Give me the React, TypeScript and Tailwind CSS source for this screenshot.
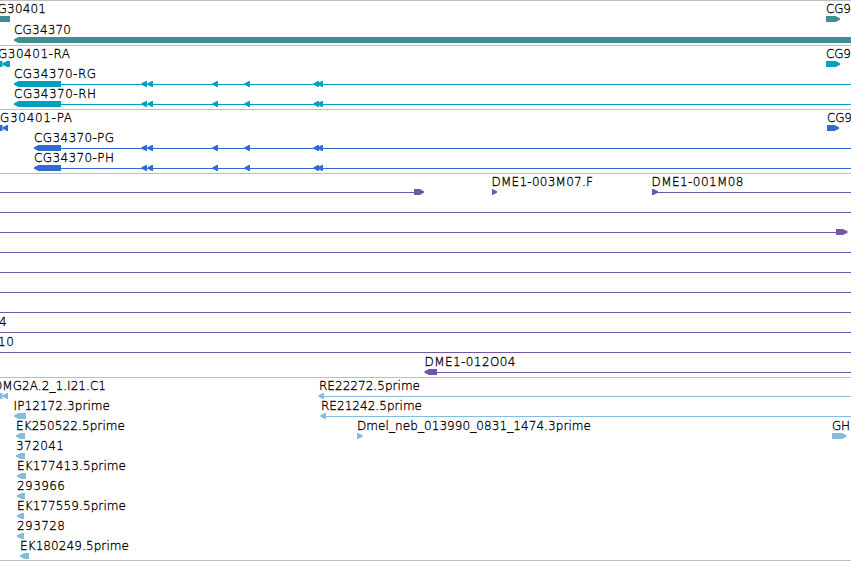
import React from "react"

type Dir = "left" | "right" | "none"

interface Box {
  start: number
  end: number
  dir: Dir
}

interface Label {
  text: string
  x: number
  width: number
}

interface Row {
  labels?: Label[]
  boxes?: Box[]
  lines?: [number, number][]
}

interface Track {
  name: string
  className: string
  rows: Row[]
}

const WIDTH = 851
const TIP = 4.5

const label = (text: string, x: number, width: number): Label => ({ text, x, width })
const box = (start: number, end: number, dir: Dir = "left"): Box => ({ start, end, dir })

// Exons shared by the CG34370 transcripts and proteins
const exons = [
  box(141.5, 147),
  box(147.5, 153),
  box(212.5, 218),
  box(244.5, 250),
  box(313.5, 319),
  box(317.5, 323),
]

const fullLine: Row = { lines: [[0, WIDTH]] }

const tracks: Track[] = [
  {
    name: "gene",
    className: "text-[#3e8e94] gap-px pb-[3px]",
    rows: [
      {
        labels: [label("CG30401", -11, 57), label("CG9", 826, 25)],
        boxes: [box(0, 10, "none"), box(826, 840, "right")],
      },
      { labels: [label("CG34370", 14, 57)], boxes: [box(14, WIDTH)] },
    ],
  },
  {
    name: "transcript",
    className: "text-[#00a0be] pb-[3px]",
    rows: [
      {
        labels: [label("CG30401-RA", -11, 81), label("CG9", 826, 25)],
        boxes: [box(0, 2.5, "none"), box(2.5, 10), box(826, 840, "right")],
      },
      {
        labels: [label("CG34370-RG", 14, 82)],
        boxes: [box(14, 61), ...exons],
        lines: [[61, WIDTH]],
      },
      {
        labels: [label("CG34370-RH", 14, 82)],
        boxes: [box(14, 61), ...exons],
        lines: [[61, WIDTH]],
      },
    ],
  },
  {
    name: "protein",
    className: "text-[#306ccf] pb-[3px]",
    rows: [
      {
        labels: [label("CG30401-PA", -9, 81), label("CG9", 827, 25)],
        boxes: [box(0, 2.5, "none"), box(2.5, 8), box(827, 839, "right")],
      },
      {
        labels: [label("CG34370-PG", 34, 80)],
        boxes: [box(34, 61), ...exons],
        lines: [[61, WIDTH]],
      },
      {
        labels: [label("CG34370-PH", 34, 80)],
        boxes: [box(34, 61), ...exons],
        lines: [[61, WIDTH]],
      },
    ],
  },
  {
    name: "bac",
    className: "text-[#7355a9] pb-[3px]",
    rows: [
      {
        labels: [label("DME1-003M07.F", 491.5, 101.5), label("DME1-001M08", 651.5, 92)],
        boxes: [box(414, 424, "right"), box(492, 497, "right"), box(652, 658, "right")],
        lines: [[0, 414], [657, WIDTH]],
      },
      fullLine,
      { boxes: [box(836, 847.5, "right")], lines: [[0, 836]] },
      fullLine,
      fullLine,
      fullLine,
      fullLine,
      { labels: [label("4", -1, 7)], lines: [[0, WIDTH]] },
      { labels: [label("10", -2, 16)], lines: [[0, WIDTH]] },
      {
        labels: [label("DME1-012O04", 424.5, 91)],
        boxes: [box(424.5, 437)],
        lines: [[437, WIDTH]],
      },
    ],
  },
  {
    name: "est",
    className: "text-[#85bbdd] pb-[2px]",
    rows: [
      {
        labels: [label("DMG2A.2_1.I21.C1", -7, 113), label("RE22272.5prime", 319, 101)],
        boxes: [box(0, 2.5, "none"), box(2.5, 8), box(318.5, 324)],
        lines: [[324, WIDTH]],
      },
      {
        labels: [label("IP12172.3prime", 13.5, 96.5), label("RE21242.5prime", 321, 101)],
        boxes: [box(14, 26), box(320.5, 326)],
        lines: [[326, WIDTH]],
      },
      {
        labels: [
          label("EK250522.5prime", 16, 109),
          label("Dmel_neb_013990_0831_1474.3prime", 357, 234),
          label("GH", 832, 18),
        ],
        boxes: [box(16, 25), box(357, 362.5, "right"), box(832, 846.5, "right")],
      },
      { labels: [label("372041", 16, 48)], boxes: [box(16, 25)] },
      { labels: [label("EK177413.5prime", 17, 109)], boxes: [box(17, 26)] },
      { labels: [label("293966", 17, 48)], boxes: [box(17, 25)] },
      { labels: [label("EK177559.5prime", 17, 109)], boxes: [box(17, 24)] },
      { labels: [label("293728", 17, 48)], boxes: [box(17, 24)] },
      { labels: [label("EK180249.5prime", 20, 109)], boxes: [box(20, 29)] },
    ],
  },
]

const boxPoints = ({ start, end, dir }: Box) => {
  if (dir === "left") {
    return `${start},17.3 ${start + TIP},15 ${end},15 ${end},21 ${start + TIP},21 ${start},18.7`
  }
  if (dir === "right") {
    return `${start},15 ${end - TIP},15 ${end},17.3 ${end},18.7 ${end - TIP},21 ${start},21`
  }
  return `${start},15 ${end},15 ${end},21 ${start},21`
}

const FeatureRow = ({ row }: { row: Row }) => (
  <svg className="block h-5 w-[851px] shrink-0 overflow-visible" fill="currentColor">
    {row.lines?.map(([from, to], i) => (
      <rect key={i} x={from} y={18} width={to - from} height={1} />
    ))}
    {row.boxes?.map((b, i) => (
      <polygon key={i} points={boxPoints(b)} />
    ))}
    {row.labels?.map((l) => (
      <text
        key={l.text}
        x={l.x}
        y={12}
        textLength={l.width}
        className="fill-black stroke-black stroke-[0.3px] font-['DejaVu_Sans',sans-serif] text-[12px] font-extralight"
      >
        {l.text}
      </text>
    ))}
  </svg>
)

const App = () => {
  return (
    <main className="flex h-[561px] w-[851px] flex-col overflow-hidden border-b border-[#bebebe] bg-white">
      {tracks.map((track) => (
        <section
          key={track.name}
          className={`flex flex-col border-t border-t-[#bebebe] ${track.className}`}
        >
          {track.rows.map((row, i) => (
            <FeatureRow key={i} row={row} />
          ))}
        </section>
      ))}
    </main>
  )
}

export default App
